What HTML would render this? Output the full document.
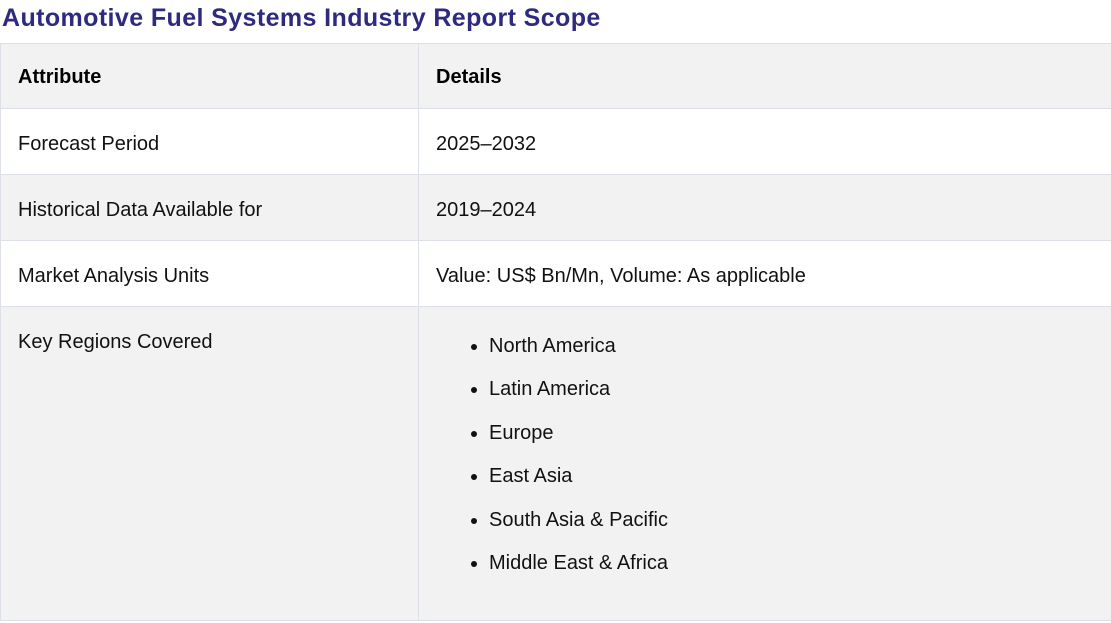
<!DOCTYPE html>
<html><head><style>
body{margin:0;width:1111px;height:623px;overflow:hidden;background:#fff;font-family:"Liberation Sans",sans-serif;color:#111;}
h1{position:absolute;left:2px;top:4px;margin:0;font-size:25px;font-weight:bold;color:#2e2a80;letter-spacing:0.4px;}
.c{position:absolute;box-sizing:border-box;border-left:1px solid #dde0e6;border-top:1px solid #dde0e6;font-size:20px;}
.t{position:absolute;left:17px;}
ul{position:absolute;left:34px;top:23px;margin:0;padding-left:36px;font-size:20px;}
li{height:43.4px;line-height:32px;}
</style></head><body>
<h1>Automotive Fuel Systems Industry Report Scope</h1>
<div class="c" style="left:0;top:43px;width:418px;height:66px;background:#f2f2f2"><span class="t" style="top:22px;font-weight:bold;color:#000">Attribute</span></div>
<div class="c" style="left:418px;top:43px;width:693px;height:66px;background:#f2f2f2"><span class="t" style="top:22px;font-weight:bold;color:#000">Details</span></div>
<div class="c" style="left:0;top:108px;width:418px;height:66px;"><span class="t" style="top:24px">Forecast Period</span></div>
<div class="c" style="left:418px;top:108px;width:693px;height:66px;"><span class="t" style="top:24px">2025–2032</span></div>
<div class="c" style="left:0;top:174px;width:418px;height:66px;background:#f2f2f2"><span class="t" style="top:24px">Historical Data Available for</span></div>
<div class="c" style="left:418px;top:174px;width:693px;height:66px;background:#f2f2f2"><span class="t" style="top:24px">2019–2024</span></div>
<div class="c" style="left:0;top:240px;width:418px;height:66px;"><span class="t" style="top:24px">Market Analysis Units</span></div>
<div class="c" style="left:418px;top:240px;width:693px;height:66px;"><span class="t" style="top:24px">Value: US$ Bn/Mn, Volume: As applicable</span></div>
<div class="c" style="left:0;top:306px;width:418px;height:315px;background:#f2f2f2;border-bottom:1px solid #dde0e6"><span class="t" style="top:24px">Key Regions Covered</span></div>
<div class="c" style="left:418px;top:306px;width:693px;height:315px;background:#f2f2f2;border-bottom:1px solid #dde0e6">
<ul><li>North America</li><li>Latin America</li><li>Europe</li><li>East Asia</li><li>South Asia &amp; Pacific</li><li>Middle East &amp; Africa</li></ul>
</div>
</body></html>
